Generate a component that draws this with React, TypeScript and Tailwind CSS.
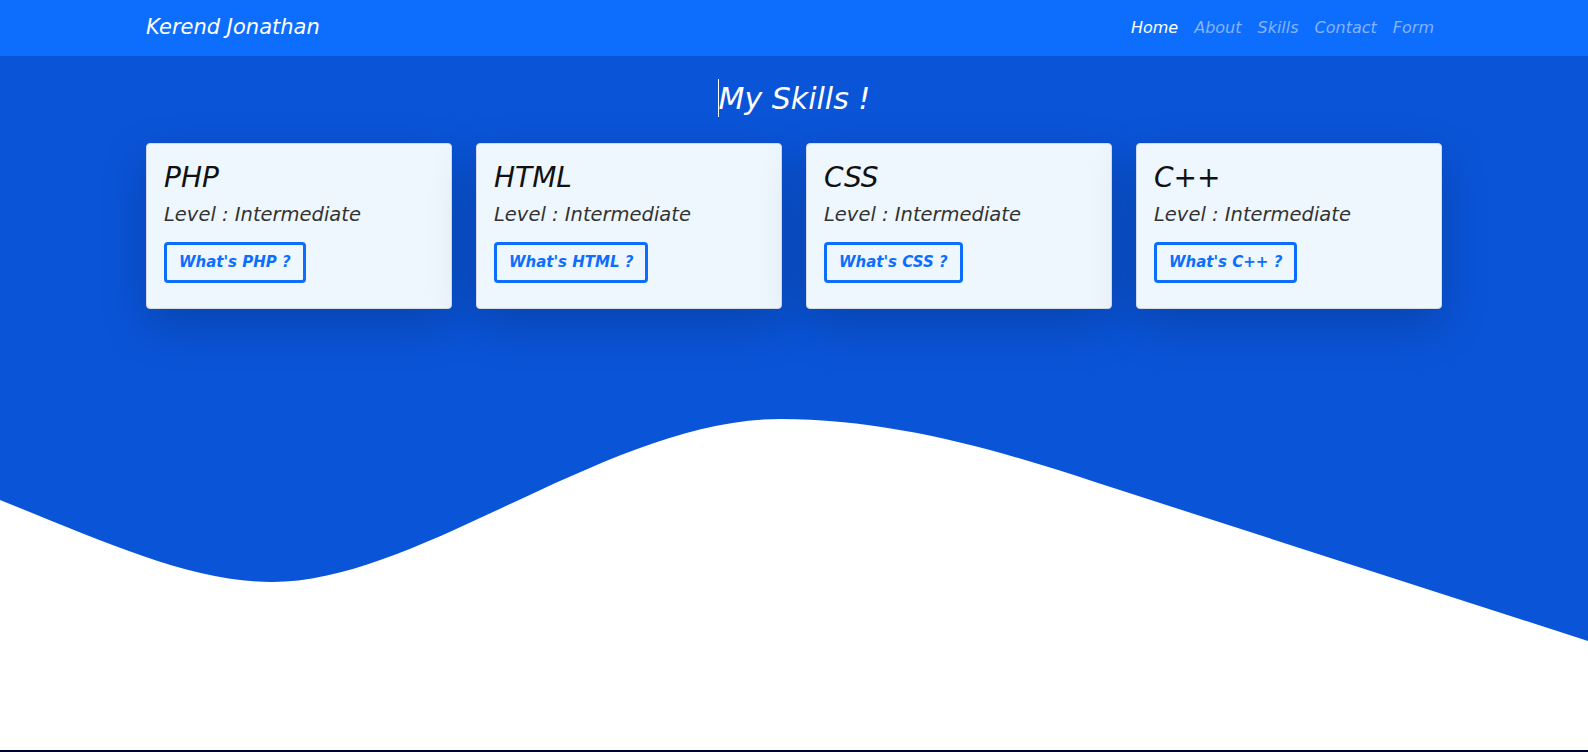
import React from "react";

const skills = ["PHP", "HTML", "CSS", "C++"];
const navLinks = ["Home", "About", "Skills", "Contact", "Form"];

// wave edge, drawn in a 1588 x 230 box
const wave =
  "M0,0 L0,84 C100,124 190,166 272,166 C420,166 610,3 780,3 C890,3 995,33 1095,66 L1588,225 L1588,0 Z";

function SkillCard({ name }: { name: string }) {
  return (
    <div className="bg-[#eef6fe] border border-[#d3dae3] rounded-[4px] shadow-[0_16px_48px_rgba(0,0,0,0.2)] h-[166px] pl-[17px] pr-4 pt-[14px]">
      <h3 className="text-[28px] leading-[40px] text-[#111]">{name}</h3>
      <p className="text-[19.5px] leading-[34px] text-[#333]">Level : Intermediate</p>
      <button className="mt-[10px] h-[41px] px-[12px] border-[3px] border-[#0d6efd] rounded-[4px] text-[15px] font-semibold text-[#0d6efd]">
        What's {name} ?
      </button>
    </div>
  );
}

export default function App() {
  return (
    <div className="min-h-screen bg-white italic" style={{ fontFamily: '"DejaVu Sans", "Open Sans", sans-serif' }}>
      {/* navbar */}
      <nav className="bg-[#0d6efd] h-14">
        <div className="w-[1296px] mx-auto h-full flex items-center justify-between">
          <span className="text-white text-[21px]">Kerend Jonathan</span>
          <ul className="flex">
            {navLinks.map((l, i) => (
              <li key={l} className={`px-2 text-[16px] ${i === 0 ? "text-white" : "text-[#86b3fd]"}`}>
                {l}
              </li>
            ))}
          </ul>
        </div>
      </nav>

      {/* skills section */}
      <section className="bg-[#0a54d8] h-[360px] pt-[23px]">
        <h2 className="flex items-center justify-center h-[38px] text-white text-[30px]">
          <span className="inline-block w-px h-[38px] bg-white" />
          My Skills !
        </h2>
        <div className="w-[1296px] mx-auto mt-[26px] grid grid-cols-4 gap-6">
          {skills.map((s) => (
            <SkillCard key={s} name={s} />
          ))}
        </div>
      </section>

      <svg className="block w-full h-[230px]" viewBox="0 0 1588 230" preserveAspectRatio="none">
        <path d={wave} fill="#0a54d8" />
      </svg>

      <div className="h-[104px]" />
      <footer className="bg-[#02022e] h-[60px]" />
    </div>
  );
}
